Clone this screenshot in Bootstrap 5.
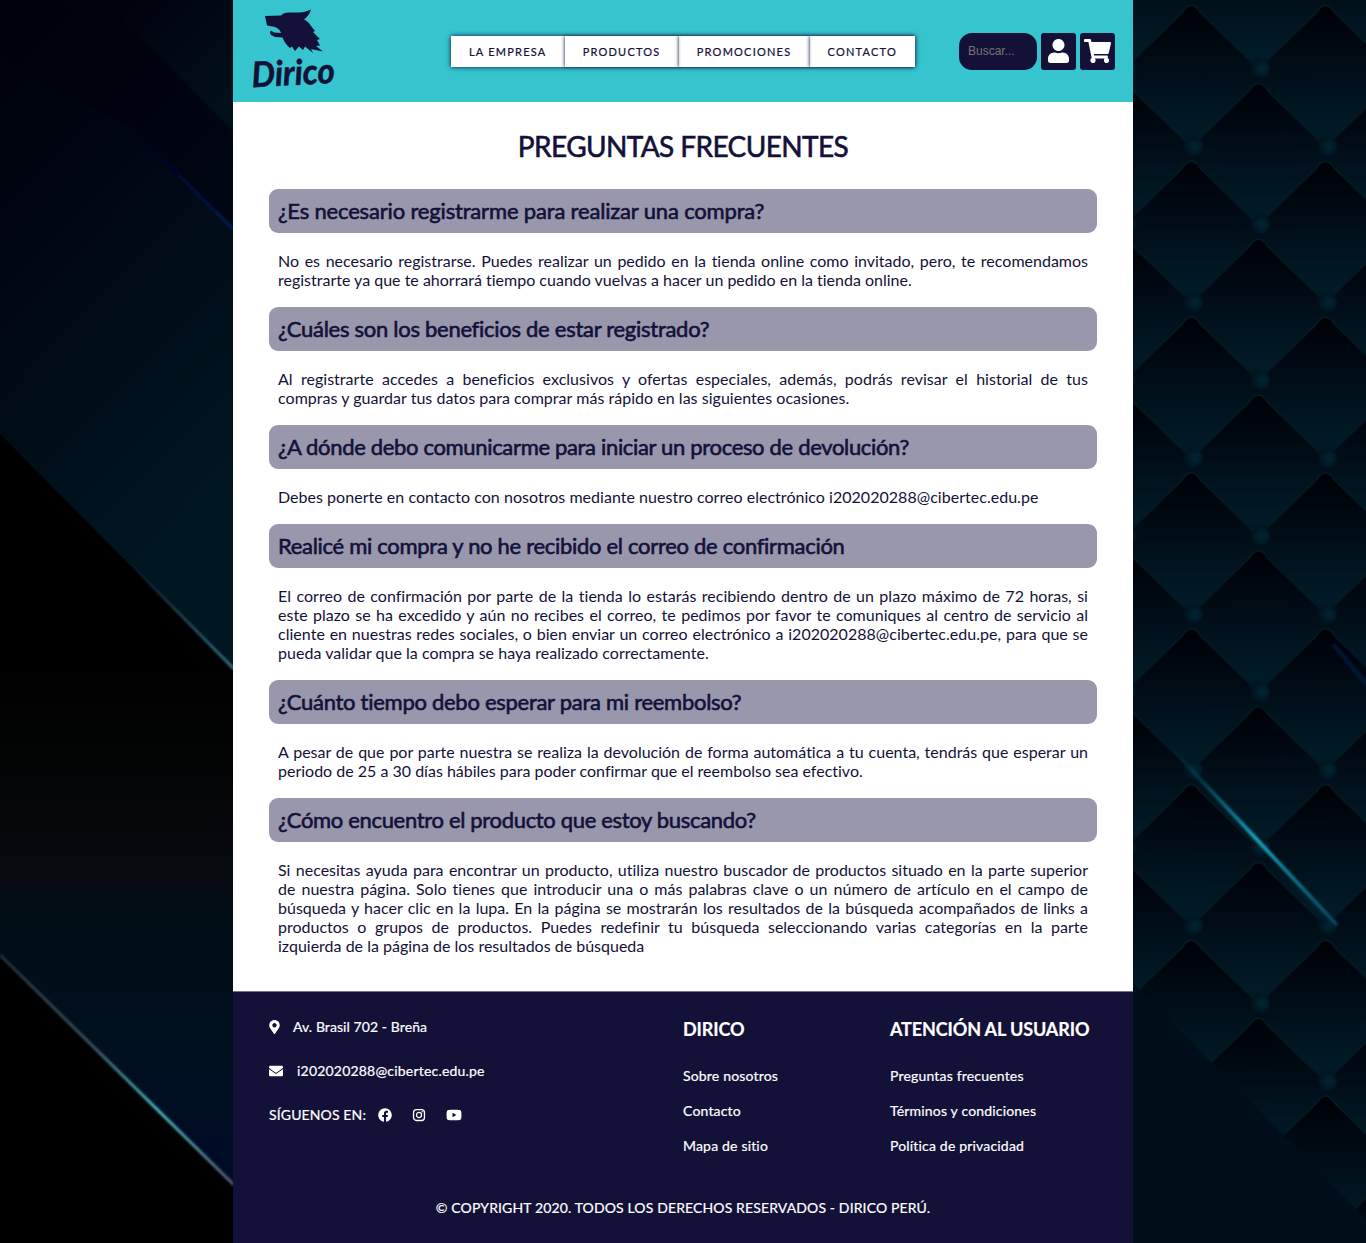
<!DOCTYPE html>
<html lang="es">
<head>
<meta charset="utf-8">
<meta name="viewport" content="width=device-width, initial-scale=1">
<title>Dirico - Preguntas frecuentes</title>
<link href="https://cdn.jsdelivr.net/npm/bootstrap@5.3.0/dist/css/bootstrap.min.css" rel="stylesheet">
<style>
  body { font-family: Lato, "Liberation Sans", sans-serif; background: #00060d; color: #141139; font-variant-ligatures: none; }
  a { color: inherit; text-decoration: none; }
  .backdrop { position: absolute; left: 0; top: 0; z-index: -1; display: block; }
  .site { width: 900px; height: 1243px; background: #fff; }
  .site-header { height: 102px; background: #36c5cf; padding: 0 18px; }
  .brand-logo { width: 90px; height: 90px; margin-left: -2px; margin-top: -2px; overflow: visible; }
  .brand-logo text { font: italic 700 35px Lato, sans-serif; }
  .main-menu { box-shadow: 0 0 5px #141139; margin-left: 112px; height: 31px; background: #fff; }
  .main-menu a { font-size: 11px; line-height: 31px; letter-spacing: 1.22px; padding: 0 18.2px 0 18px; -webkit-text-stroke: .2px #141139; }
  .main-menu a + a { box-shadow: -1px 0 3px #141139aa; }
  .search-box { width: 78px; height: 37px; border: 0; border-radius: 13px; background: #141139; color: #777; font: 12px "Liberation Sans", sans-serif; padding: 0 9px; }
  .search-box::placeholder { color: #757575; opacity: 1; }
  .tool-btn { width: 35px; height: 37px; background: #141139; border-radius: 3px; }
  .page-title { font-size: 28px; line-height: 34px; letter-spacing: -.6px; margin: 27px 0 26px; font-weight: 400; -webkit-text-stroke: .6px #141139; }
  .faq { padding: 0 36px 36px; }
  .faq h2 { height: 44px; line-height: 44px; padding: 0 9px; margin: 0 0 18px; border-radius: 9px; background: #9897ac; font-size: 22px; font-weight: 400; -webkit-text-stroke: .6px #141139; letter-spacing: -.28px; }
  .faq h2:nth-of-type(1) { letter-spacing: -.17px; }
  .faq h2:nth-of-type(4) { letter-spacing: -.3px; }
  .faq h2:nth-of-type(3), .faq h2:nth-of-type(6) { letter-spacing: -.33px; }
  .faq p { font-size: 16px; line-height: 19px; margin: 0 9px 18px; text-align: justify; }
  .faq p:nth-of-type(2), .faq p:nth-of-type(3), .faq p:nth-of-type(4) { letter-spacing: .03px; }
  .faq p:last-child { margin-bottom: 0; }
  .site-footer { height: 252px; background: #141139; color: #fff; border-top: 1px solid #73718a; font-size: 14px; line-height: 17px; padding: 0 36px; letter-spacing: .13px; -webkit-text-stroke: .2px #fff; }
  .contact-col { width: 414px; padding-top: 26px; }
  .links-col { width: 207px; padding-top: 26px; }
  .contact-col > div { height: 17px; margin-bottom: 27px; }
  .contact-label { padding-left: 13px; letter-spacing: .08px; }
  .mail-label { padding-left: 14px; letter-spacing: .2px; }
  .social-icons { gap: 20px; margin-left: 12px; }
  .links-col h3 { font-size: 18px; line-height: 22px; margin: 0 0 27px; font-weight: 700; letter-spacing: -.12px; white-space: nowrap; }
  .links-col a { display: block; margin-bottom: 18px; letter-spacing: .18px; }
  .copyright { margin-top: 27px; }
</style>
<script src="https://cdn.jsdelivr.net/npm/bootstrap@5.3.0/dist/js/bootstrap.bundle.min.js"></script>
</head>
<body>
<svg class="backdrop" width="1366" height="1243" viewBox="0 0 1366 1243" aria-hidden="true">
  <defs>
    <linearGradient id="panelA" x1="0" y1="0" x2=".35" y2="1"><stop offset="0" stop-color="#00020a"/><stop offset=".3" stop-color="#000511"/><stop offset="1" stop-color="#001722"/></linearGradient>
    <linearGradient id="panelB" gradientUnits="userSpaceOnUse" x1="0" y1="650" x2="0" y2="1184"><stop offset="0" stop-color="#000"/><stop offset=".2" stop-color="#030404"/><stop offset=".43" stop-color="#070a10"/><stop offset=".48" stop-color="#000d15"/><stop offset=".75" stop-color="#00101e"/><stop offset="1" stop-color="#000b28"/></linearGradient>
    <linearGradient id="panelC" x1="0" y1="0" x2="1" y2="1"><stop offset="0" stop-color="#02000c"/><stop offset="1" stop-color="#00121d"/></linearGradient>
    <linearGradient id="glowA" gradientUnits="userSpaceOnUse" x1="0" y1="955" x2="233" y2="1184"><stop offset="0" stop-color="#263039"/><stop offset=".4" stop-color="#3d5361"/><stop offset=".68" stop-color="#45c0c8"/><stop offset="1" stop-color="#575a70"/></linearGradient>
    <linearGradient id="glowB" gradientUnits="userSpaceOnUse" x1="130" y1="563" x2="233" y2="668"><stop offset="0" stop-color="#3d6270" stop-opacity="0"/><stop offset="1" stop-color="#356e89"/></linearGradient>
    <linearGradient id="glowC" gradientUnits="userSpaceOnUse" x1="130" y1="127" x2="233" y2="229"><stop offset="0" stop-color="#09063a" stop-opacity="0"/><stop offset="1" stop-color="#031749"/></linearGradient>
    <linearGradient id="glowD" gradientUnits="userSpaceOnUse" x1="1172" y1="750" x2="1338" y2="926"><stop offset="0" stop-color="#0a6988" stop-opacity="0"/><stop offset=".5" stop-color="#17a8c0"/><stop offset="1" stop-color="#0a5372" stop-opacity=".7"/></linearGradient>
    <linearGradient id="quilt" x1="0" y1="0" x2="0" y2="1"><stop offset="0" stop-color="#000106"/><stop offset=".2" stop-color="#00060f"/><stop offset=".45" stop-color="#000e18"/><stop offset=".85" stop-color="#001b27"/><stop offset="1" stop-color="#001620"/></linearGradient>
    <linearGradient id="seam" x1="0" y1="0" x2="0" y2="1"><stop offset="0" stop-color="#051a24"/><stop offset=".4" stop-color="#04161f"/><stop offset=".43" stop-color="#04161f" stop-opacity="0"/></linearGradient>
    <radialGradient id="stud" cx=".58" cy=".5"><stop offset="0" stop-color="#002632"/><stop offset=".6" stop-color="#001c28"/><stop offset="1" stop-color="#00141e"/></radialGradient>
    <path id="pad" d="M58 9Q62 2 67 2Q72 2 76 9L134.200 66V80L67.100 150 0 80V66Z" fill="url(#quilt)" stroke="url(#seam)" stroke-width="1.5"/>
    <circle id="button" cx="69" cy="143" r="9.500" fill="url(#stud)"/>
    <pattern id="quilting" patternUnits="userSpaceOnUse" x="1124.300" y="3.500" width="134.200" height="155.800">
      <rect width="135" height="156" fill="#001620"/>
      <use href="#pad" y="-155.800"/>
      <use href="#pad" x="-67.100" y="-77.900"/><use href="#pad" x="67.100" y="-77.900"/>
      <use href="#pad"/>
      <use href="#pad" x="-67.100" y="77.900"/><use href="#pad" x="67.100" y="77.900"/>
      <use href="#button"/><use href="#button" x="-67.100" y="-77.900"/><use href="#button" x="67.100" y="-77.900"/>
    </pattern>
    <filter id="soft"><feGaussianBlur stdDeviation=".8"/></filter>
  </defs>
  <rect width="233" height="1243" fill="#000"/>
  <path d="M0 0H233V669L0 434Z" fill="url(#panelA)"/>
  <path d="M102 0H233V131Z" fill="url(#panelC)"/>
  <path d="M102 0L233 131V228L130 127 0 60V0Z" fill="#00020a" opacity=".4" filter="url(#soft)"/>
  <path d="M0 650H213L233 670V1184L0 955Z" fill="url(#panelB)"/>
  <g fill="none" filter="url(#soft)">
    <path d="M130 127L234 230" stroke="url(#glowC)" stroke-width="4"/>
    <path d="M130 564L234 669" stroke="url(#glowB)" stroke-width="3"/>
    <path d="M0 955L234 1185" stroke="url(#glowA)" stroke-width="3"/>
  </g>
  <rect x="1133" width="233" height="1243" fill="url(#quilting)"/>
  <path d="M1133 983L1366 1219V1243H1133Z" fill="#000e19"/>
  <g fill="none" filter="url(#soft)">
    <path d="M1172 749L1337 925" stroke="url(#glowD)" stroke-width="4"/>
    <path d="M1333 644L1367 685" stroke="#02224a" stroke-width="5" opacity=".6"/>
  </g>
</svg>

<div class="site mx-auto d-flex flex-column">
  <header class="site-header d-flex align-items-center">
    <a href="#" class="d-block" aria-label="Dirico">
      <svg class="brand-logo d-block" viewBox="0 0 90 90">
        <path fill="#141139" d="M16 11L32 10.500Q35 7 41 7.500L50 7.500Q57 7 62 4.500Q60 11 55 14.500Q60 17 62 21L66 26 64 27 71 34 68 35 71 40.500 67 41 74 46.500 62 44 64 48 56 41.500 54 45 50 41.500 46 46 43 41.500 41 43Q36 39 33.500 32.500L26 32 22 30Q20 27 22 25.500L25 27.500 32 28Q31 24 26 22L18 20.500Z"/>
        <text x="3" y="80" fill="#141139" stroke="#141139" stroke-width=".6" textLength="83" lengthAdjust="spacingAndGlyphs" transform="rotate(-3 45 75)">Dirico</text>
      </svg>
    </a>
    <nav class="main-menu d-flex">
      <a href="#">LA EMPRESA</a><a href="#">PRODUCTOS</a><a href="#">PROMOCIONES</a><a href="#">CONTACTO</a>
    </nav>
    <div class="d-flex gap-1 ms-auto">
      <input class="search-box" type="text" placeholder="Buscar...">
      <a href="#" class="tool-btn d-flex align-items-center justify-content-center" aria-label="Usuario">
        <svg width="21" height="24" viewBox="0 0 448 512" fill="#fff"><path d="M224 256c70.700 0 128-57.300 128-128S294.700 0 224 0 96 57.300 96 128s57.300 128 128 128zm89.600 32h-16.700c-22.200 10.200-46.900 16-72.900 16s-50.600-5.800-72.900-16h-16.700C60.200 288 0 348.200 0 422.400V464c0 26.500 21.500 48 48 48h352c26.500 0 48-21.500 48-48v-41.600c0-74.200-60.200-134.400-134.400-134.400z"/></svg>
      </a>
      <a href="#" class="tool-btn d-flex align-items-center justify-content-center" aria-label="Carrito">
        <svg width="27" height="24" viewBox="0 0 576 512" fill="#fff"><path d="M528.120 301.319l47.273-208C578.806 78.301 567.391 64 551.990 64H159.208l-9.166-44.810C147.758 8.021 137.930 0 126.529 0H24C10.745 0 0 10.745 0 24v16c0 13.255 10.745 24 24 24h69.883l70.248 343.435C147.325 417.100 136 435.222 136 456c0 30.928 25.072 56 56 56s56-25.072 56-56c0-15.674-6.447-29.835-16.824-40h209.647C430.447 426.165 424 440.326 424 456c0 30.928 25.072 56 56 56s56-25.072 56-56c0-22.172-12.888-41.332-31.579-50.405l5.517-24.276c3.413-15.018-8.002-29.319-23.403-29.319H218.117l-6.545-32h293.145c11.206 0 20.920-7.754 23.403-18.681z"/></svg>
      </a>
    </div>
  </header>

  <main class="faq flex-grow-1">
    <h1 class="page-title text-center">PREGUNTAS FRECUENTES</h1>
    <h2>¿Es necesario registrarme para realizar una compra?</h2>
    <p>No es necesario registrarse. Puedes realizar un pedido en la tienda online como invitado, pero, te recomendamos registrarte ya que te ahorrará tiempo cuando vuelvas a hacer un pedido en la tienda online.</p>
    <h2>¿Cuáles son los beneficios de estar registrado?</h2>
    <p>Al registrarte accedes a beneficios exclusivos y ofertas especiales, además, podrás revisar el historial de tus compras y guardar tus datos para comprar más rápido en las siguientes ocasiones.</p>
    <h2>¿A dónde debo comunicarme para iniciar un proceso de devolución?</h2>
    <p>Debes ponerte en contacto con nosotros mediante nuestro correo electrónico i202020288@cibertec.edu.pe</p>
    <h2>Realicé mi compra y no he recibido el correo de confirmación</h2>
    <p>El correo de confirmación por parte de la tienda lo estarás recibiendo dentro de un plazo máximo de 72 horas, si este plazo se ha excedido y aún no recibes el correo, te pedimos por favor te comuniques al centro de servicio al cliente en nuestras redes sociales, o bien enviar un correo electrónico a i202020288@cibertec.edu.pe, para que se pueda validar que la compra se haya realizado correctamente.</p>
    <h2>¿Cuánto tiempo debo esperar para mi reembolso?</h2>
    <p>A pesar de que por parte nuestra se realiza la devolución de forma automática a tu cuenta, tendrás que esperar un periodo de 25 a 30 días hábiles para poder confirmar que el reembolso sea efectivo.</p>
    <h2>¿Cómo encuentro el producto que estoy buscando?</h2>
    <p>Si necesitas ayuda para encontrar un producto, utiliza nuestro buscador de productos situado en la parte superior de nuestra página. Solo tienes que introducir una o más palabras clave o un número de artículo en el campo de búsqueda y hacer clic en la lupa. En la página se mostrarán los resultados de la búsqueda acompañados de links a productos o grupos de productos. Puedes redefinir tu búsqueda seleccionando varias categorías en la parte izquierda de la página de los resultados de búsqueda</p>
  </main>

  <footer class="site-footer">
    <div class="d-flex">
      <div class="contact-col">
        <div class="d-flex align-items-center"><svg width="11" height="14" viewBox="0 0 384 512" fill="#fff"><path d="M172.268 501.670C26.970 291.031 0 269.413 0 192 0 85.961 85.961 0 192 0s192 85.961 192 192c0 77.413-26.970 99.031-172.268 309.670-9.535 13.774-29.930 13.773-39.464 0zM192 272c44.183 0 80-35.817 80-80s-35.817-80-80-80-80 35.817-80 80 35.817 80 80 80z"/></svg><span class="contact-label">Av. Brasil 702 - Breña</span></div>
        <div class="d-flex align-items-center"><svg width="14" height="14" viewBox="0 0 512 512" fill="#fff"><path d="M502.300 190.800c3.900-3.100 9.700-.2 9.700 4.700V400c0 26.500-21.500 48-48 48H48c-26.500 0-48-21.500-48-48V195.600c0-5 5.700-7.800 9.700-4.700 22.400 17.400 52.100 39.500 154.100 113.600 21.100 15.400 56.700 47.800 92.200 47.600 35.700.3 72-32.800 92.300-47.600 102-74.100 131.600-96.300 154-113.700zM256 320c23.200.4 56.600-29.200 73.400-41.400 132.700-96.300 142.800-104.700 173.400-128.700 5.800-4.500 9.200-11.500 9.200-18.900v-19c0-26.500-21.500-48-48-48H48c-26.500 0-48 21.500-48 48v19c0 7.400 3.400 14.300 9.200 18.900 30.600 23.900 40.700 32.400 173.400 128.700 16.800 12.200 50.200 41.800 73.400 41.400z"/></svg><span class="contact-label mail-label">i202020288@cibertec.edu.pe</span></div>
        <div class="d-flex align-items-center"><span>SÍGUENOS EN:</span>
          <span class="social-icons d-flex align-items-center">
            <svg width="14" height="14" viewBox="0 0 512 512" fill="#fff"><path d="M504 256C504 119 393 8 256 8S8 119 8 256c0 123.780 90.690 226.380 209.250 245V327.690h-63V256h63v-54.640c0-62.150 37-96.480 93.670-96.480 27.140 0 55.520 4.840 55.520 4.840v61h-31.280c-30.800 0-40.410 19.120-40.410 38.730V256h68.780l-11 71.690h-57.780V501C413.310 482.380 504 379.780 504 256z"/></svg>
            <svg width="14" height="14" viewBox="0 0 448 512" fill="none" stroke="#fff"><rect x="24" y="56" width="400" height="400" rx="108" stroke-width="48"/><circle cx="224" cy="256" r="92" stroke-width="46"/><circle cx="343" cy="137" r="28" fill="#fff" stroke="none"/></svg>
            <svg width="16" height="14" viewBox="0 0 576 512" fill="#fff"><path d="M549.655 124.083c-6.281-23.650-24.787-42.276-48.284-48.597C458.781 64 288 64 288 64S117.220 64 74.629 75.486c-23.497 6.322-42.003 24.947-48.284 48.597-11.412 42.867-11.412 132.305-11.412 132.305s0 89.438 11.412 132.305c6.281 23.650 24.787 41.500 48.284 47.821C117.220 448 288 448 288 448s170.780 0 213.371-11.486c23.497-6.321 42.003-24.171 48.284-47.821 11.412-42.867 11.412-132.305 11.412-132.305s0-89.438-11.412-132.305zm-317.510 213.508V175.185l142.739 81.205-142.739 81.201z"/></svg>
          </span>
        </div>
      </div>
      <div class="links-col">
        <h3>DIRICO</h3>
        <a href="#">Sobre nosotros</a><a href="#">Contacto</a><a href="#">Mapa de sitio</a>
      </div>
      <div class="links-col">
        <h3>ATENCIÓN AL USUARIO</h3>
        <a href="#">Preguntas frecuentes</a><a href="#">Términos y condiciones</a><a href="#">Política de privacidad</a>
      </div>
    </div>
    <div class="copyright text-center">© COPYRIGHT 2020. TODOS LOS DERECHOS RESERVADOS - DIRICO PERÚ.</div>
  </footer>
</div>
</body>
</html>
